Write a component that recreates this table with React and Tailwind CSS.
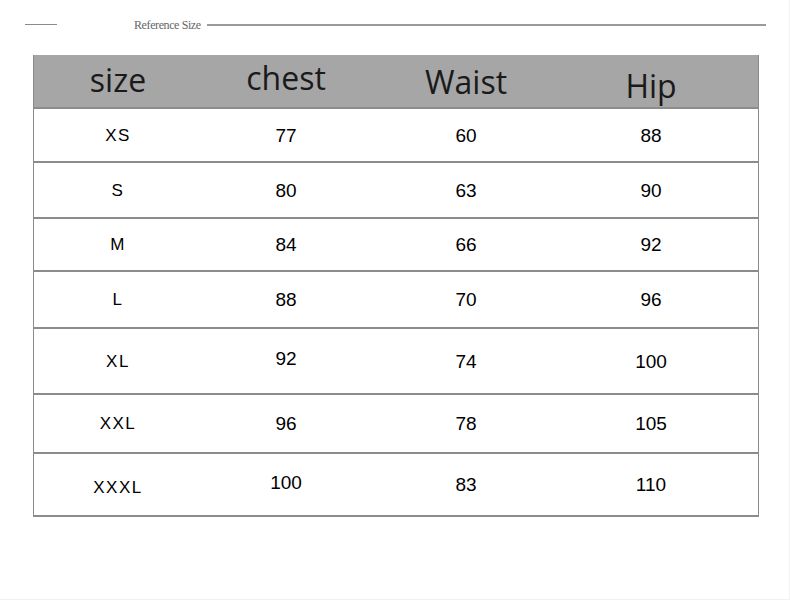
import React from "react";

const rows = [
  { h: "h-[54px]", c: ["XS", "77", "60", "88"], n: [0, 0, 0, 0] },
  { h: "h-[56px]", c: ["S", "80", "63", "90"], n: [0, 0, 0, 0] },
  { h: "h-[53px]", c: ["M", "84", "66", "92"], n: [0, 0, 0, 0] },
  { h: "h-[57px]", c: ["L", "88", "70", "96"], n: [0, 0, 0, 0] },
  { h: "h-[66px]", c: ["XL", "92", "74", "100"], n: [0, 1, 0, 0] },
  { h: "h-[59px]", c: ["XXL", "96", "78", "105"], n: [0, 0, 0, 0] },
  { h: "h-[61px]", c: ["XXXL", "100", "83", "110"], n: [2, 1, 0, 0] },
];

const nudge = ["", "mb-[5px]", "mt-[5px]"];

export default function App() {
  return (
    <div className="w-[790px] h-[600px] bg-white border-r border-b border-[#f2f2f2] pt-[23px]">
      <div className="flex items-center h-[3px]">
        <div className="ml-[25px] w-[32px] h-px bg-[#8a8a8a]" />
        <div
          className="ml-[77px] text-[12px] leading-none text-[#666] tracking-[-0.4px]"
          style={{ fontFamily: '"Liberation Serif", serif' }}
        >
          Reference Size
        </div>
        <div className="ml-[6px] w-[559px] h-[2px] bg-[#9a9a9a]" />
      </div>
      <div className="ml-[33px] mt-[29px] w-[726px] border-x border-[#8c8c8c] border-b-2">
        <div
          className="h-[54px] bg-[#a6a6a6] border-b-2 border-[#8c8c8c] grid grid-cols-[168px_168px_192px_178px] items-center text-center text-[32px] leading-none text-[#1a1a1a]"
          style={{ fontFamily: '"Open Sans", sans-serif' }}
        >
          <div className="mb-[2px]">size</div>
          <div className="mb-[6px]">chest</div>
          <div className="mt-[2px]">Waist</div>
          <div className="mt-[10px]">Hip</div>
        </div>
        {rows.map((r, i) => (
          <div
            key={i}
            className={`${r.h} ${i < rows.length - 1 ? "border-b-2 border-[#8c8c8c]" : ""} grid grid-cols-[168px_168px_192px_178px] items-center text-center text-black`}
            style={{ fontFamily: '"Liberation Sans", Arial, sans-serif' }}
          >
            {r.c.map((t, j) => (
              <div
                key={j}
                className={`${j === 0 ? "text-[17px] tracking-[1.5px]" : "text-[19px]"} leading-none ${nudge[r.n[j]]}`}
              >
                {t}
              </div>
            ))}
          </div>
        ))}
      </div>
    </div>
  );
}
